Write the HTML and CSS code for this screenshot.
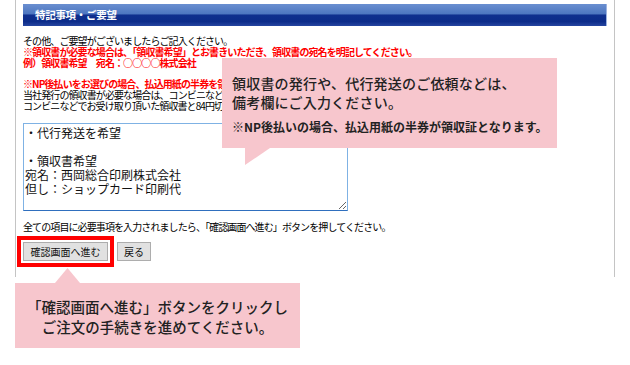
FILE: index.html
```html
<!DOCTYPE html>
<html lang="ja">
<head>
<meta charset="utf-8">
<link rel="stylesheet" href="styles.css">
</head>
<body>
<div class="page">
  <div class="frame">
    <div class="heading">特記事項・ご要望</div>
    <div class="notes">
      <p>その他、ご要望がございましたらご記入ください。</p>
      <p class="red">※領収書が必要な場合は、「領収書希望」とお書きいただき、領収書の宛名を明記してください。</p>
      <p class="red">例）領収書希望　宛名：○○○○株式会社</p>
      <p class="blank">&nbsp;</p>
      <p class="red clip">※NP後払いをお選びの場合、払込用紙の半券を領収証としてご利用ください。</p>
      <p class="clip">当社発行の領収書が必要な場合は、コンビニなどでのお支払い後にご連絡ください。</p>
      <p class="clip">コンビニなどでお受け取り頂いた領収書と84円切手を同封の上、ご返送ください。</p>
    </div>
    <textarea class="memo">・代行発送を希望

・領収書希望
宛名：西岡総合印刷株式会社
但し：ショップカード印刷代</textarea>
    <p class="guide">全ての項目に必要事項を入力されましたら、「確認画面へ進む」ボタンを押してください。</p>
    <div class="buttons">
      <button class="btn btn-next">確認画面へ進む</button>
      <button class="btn">戻る</button>
    </div>
  </div>
  <div class="callout callout-bottom">
    <p>「確認画面へ進む」ボタンをクリックし</p>
    <p>ご注文の手続きを進めてください。</p>
  </div>
  <div class="callout callout-top">
    <p class="big">領収書の発行や、代行発送のご依頼などは、</p>
    <p class="big">備考欄にご入力ください。</p>
    <p class="small">※NP後払いの場合、払込用紙の半券が領収証となります。</p>
  </div>
</div>
</body>
</html>
```
FILE: styles.css
```css
* { box-sizing: border-box; }
html, body {
  margin: 0;
  padding: 0;
  background: #fff;
  width: 630px;
  height: 365px;
  overflow: hidden;
  font-family: "Noto Sans CJK JP", "Noto Sans", sans-serif;
  color: #111;
}
p { margin: 0; }
.page {
  position: relative;
  width: 630px;
  height: 365px;
}
.frame {
  margin-left: 15px;
  width: 600px;
  height: 277px;
  border-left: 1px solid #c4c4c4;
  border-right: 1px solid #c4c4c4;
  padding: 4px 7px 0 7px;
  display: flex;
  flex-direction: column;
  align-items: flex-start;
}
.heading {
  width: 584px;
  height: 22px;
  background: linear-gradient(to bottom, #6a8fd0 0%, #4d76c0 45%, #0f2f8e 50%, #0c2c8a 80%, #2645a0 100%);
  border-right: 1px solid #9db3e0;
  color: #fff;
  font-weight: bold;
  font-size: 10.5px;
  line-height: 22px;
  padding-left: 12px;
  letter-spacing: -0.3px;
}
.notes {
  margin-top: 10px;
  font-size: 10px;
  line-height: 10.8px;
  letter-spacing: -0.9px;
  white-space: nowrap;
  color: #000;
}
.notes .red {
  color: #f00;
  font-weight: bold;
}
.notes .clip {
  width: 199px;
  overflow: hidden;
}
.memo {
  margin-top: 11px;
  width: 325px;
  height: 88px;
  border: 1px solid #7fb2e4;
  border-bottom-color: #2f6fbe;
  padding: 2px 1px;
  font-family: "Noto Sans CJK JP", sans-serif;
  font-size: 12px;
  line-height: 14px;
  color: #111;
  background: #fff;
  resize: both;
  outline: none;
  overflow: hidden;
}
.guide {
  margin-top: 10px;
  font-size: 10px;
  line-height: 11px;
  letter-spacing: -0.9px;
  white-space: nowrap;
  color: #000;
}
.buttons {
  margin-top: 10px;
  display: flex;
  gap: 9px;
}
.btn {
  height: 19px;
  padding: 0 6px;
  background: #e1e1e1;
  border: 1px solid #adadad;
  border-radius: 0;
  font-family: "Noto Sans CJK JP", sans-serif;
  font-size: 10px;
  line-height: 17px;
  color: #111;
}
.btn-next {
  width: 85px;
  outline: 4px solid #f00;
  outline-offset: 2px;
}
.callout {
  background: #f7c6cd;
  color: #222;
}
.callout-bottom {
  position: relative;
  margin: 6px 0 0 15px;
  width: 285px;
  height: 65px;
  padding-top: 14px;
  text-align: center;
  font-size: 14.5px;
  line-height: 20px;
  font-weight: 500;
}
.callout-bottom::before {
  content: "";
  position: absolute;
  left: 40px;
  top: -15px;
  width: 25px;
  height: 15px;
  background: #f7c6cd;
  clip-path: polygon(50% 0, 100% 100%, 0 100%);
}
.callout-top {
  position: absolute;
  left: 222px;
  top: 58px;
  width: 335px;
  height: 90px;
  padding: 16px 0 0 10px;
  white-space: nowrap;
}
.callout-top::after {
  content: "";
  position: absolute;
  left: 23px;
  top: 90px;
  width: 25px;
  height: 17px;
  background: #f7c6cd;
  clip-path: polygon(0 0, 100% 0, 0 100%);
}
.callout-top .big {
  font-size: 14px;
  line-height: 19px;
  letter-spacing: 0.2px;
  font-weight: 500;
}
.callout-top .small {
  margin-top: 7px;
  font-size: 12px;
  line-height: 16px;
  font-weight: bold;
}
```
